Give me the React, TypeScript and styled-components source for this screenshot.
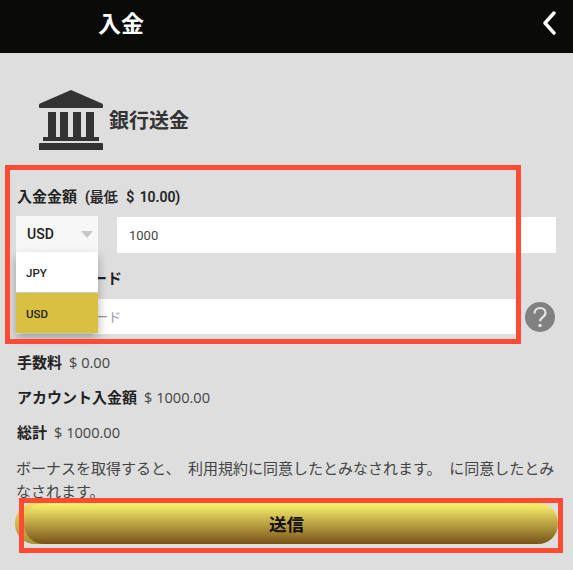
import React from "react";
import styled, { createGlobalStyle } from "styled-components";

const Global = createGlobalStyle`
  html, body { margin: 0; padding: 0; background: #dedede; }
  body { font-family: Roboto, "Noto Sans CJK JP", sans-serif; color: #222; overflow: hidden; }
`;
const Page = styled.div`
  position: relative;
  width: 573px;
  height: 570px;
  overflow: hidden;
  background: #dedede;
`;
const Header = styled.header`
  height: 53px;
  background: #0a0a09;
  display: flex;
  align-items: center;
  justify-content: space-between;
  padding: 0 17px 0 98px;
  color: #fff;
`;
const HeaderTitle = styled.h1`
  margin: 0 0 4px;
  font-size: 23px;
  font-weight: 700;
  line-height: 49px;
`;
const BackIcon = styled.svg`
  display: block;
  width: 14px;
  height: 24px;
  margin-bottom: 7px;
`;
const Method = styled.div`
  display: flex;
  align-items: center;
  gap: 6px;
  padding: 37px 0 0 39px;
  height: 60px;
`;
const BankIcon = styled.svg`
  display: block;
  flex: none;
  width: 64px;
  height: 60px;
`;
const MethodName = styled.span`
  font-size: 20px;
  font-weight: 700;
  line-height: 24px;
  margin-top: 2px;
  color: #333;
`;
const Form = styled.form`
  padding: 37px 17px 0 16px;
`;
const Label = styled.div`
  font-size: 15px;
  font-weight: 700;
  line-height: 20px;
  color: #222;
  padding-left: 1px;
`;
const LabelNote = styled.span`
  margin-left: 8px;
  font-size: 14px;
  font-weight: 500;
  -webkit-text-stroke: 0.2px #222;
  word-spacing: 2px;
`;
const AmountRow = styled.div`
  display: flex;
  gap: 19px;
  margin-top: 9px;
  align-items: flex-start;
`;
const Select = styled.div`
  position: relative;
  width: 82px;
  height: 36px;
  flex: none;
  background: #f7f7f7;
  box-sizing: border-box;
  padding-left: 11px;
  display: flex;
  align-items: center;
  font-size: 14px;
  font-weight: 500;
  color: #222;
`;
const Caret = styled.span`
  position: absolute;
  right: 5px;
  top: 15px;
  border-left: 6px solid transparent;
  border-right: 6px solid transparent;
  border-top: 7px solid #c8c8c8;
`;
const Menu = styled.ul`
  position: absolute;
  left: 0;
  top: 36px;
  width: 82px;
  margin: 0;
  padding: 0;
  list-style: none;
  background: #fff;
  box-shadow: 0 5px 10px rgba(0, 0, 0, 0.3);
  z-index: 2;
`;
const Option = styled.li<{ $active?: boolean }>`
  height: 40px;
  box-sizing: border-box;
  padding: 2px 0 0 10px;
  display: flex;
  align-items: center;
  font-size: 11.5px;
  color: #222;
  background: ${(p) => (p.$active ? "#d8c040" : "#fff")};
  ${(p) => (p.$active ? "border-top: 1px solid #c9c9c9; height: 41px;" : "")}
`;
const Input = styled.div<{ $placeholder?: boolean }>`
  flex: 1;
  height: 36px;
  margin-top: 1px;
  background: #fff;
  box-sizing: border-box;
  padding-left: ${(p) => (p.$placeholder ? "13px" : "12px")};
  display: flex;
  align-items: center;
  font-size: ${(p) => (p.$placeholder ? "13.2px" : "13px")};
  color: ${(p) => (p.$placeholder ? "#999" : "#444")};
`;
const BonusLabel = styled(Label)`
  margin-top: 16px;
`;
const BonusRow = styled.div`
  display: flex;
  align-items: flex-start;
  gap: 8px;
  margin-top: 10px;
  padding-right: 1px;
`;
const BonusInput = styled(Input)`
  height: 35px;
  margin-top: 0;
`;
const HelpIcon = styled.svg`
  display: block;
  width: 30px;
  height: 30px;
  flex: none;
  margin-top: 3px;
`;
const Summary = styled.div`
  margin-top: 17px;
  padding-left: 1px;
  display: flex;
  flex-direction: column;
  gap: 13px;
`;
const SummaryRow = styled.div`
  display: flex;
  align-items: baseline;
  gap: 7px;
  height: 22px;
  line-height: 22px;
`;
const SummaryKey = styled.span`
  font-size: 15px;
  font-weight: 700;
  color: #222;
`;
const SummaryValue = styled.span`
  font-size: 14.6px;
  color: #444;
  font-family: "Open Sans", "Noto Sans CJK JP", sans-serif;
`;
const Terms = styled.p`
  margin: 15px 0 0;
  width: 541px;
  font-size: 15px;
  line-height: 23px;
  color: #444;
  word-spacing: 4px;
`;
const Submit = styled.button`
  position: absolute;
  left: 24px;
  top: 503px;
  width: 534px;
  height: 41px;
  border: 0;
  border-radius: 20px;
  background: linear-gradient(#fdf56f, #7a5219);
  font: 700 17.5px Roboto, "Noto Sans CJK JP", sans-serif;
  color: #111;
  padding: 0 9px 0 0;
`;
const SubmitBack = styled.div`
  position: absolute;
  left: 15px;
  top: 503px;
  width: 60px;
  height: 41px;
  border-radius: 20px;
  background: linear-gradient(#f0e060, #a89038);
`;
const Callout = styled.div<{ $x: number; $y: number; $w: number; $h: number }>`
  position: absolute;
  left: ${(p) => p.$x}px;
  top: ${(p) => p.$y}px;
  width: ${(p) => p.$w}px;
  height: ${(p) => p.$h}px;
  box-sizing: border-box;
  border: 5px solid #ff4b33;
  z-index: 3;
  pointer-events: none;
`;

export default function App() {
  return (
    <Page>
      <Global />
      <Header>
        <HeaderTitle>入金</HeaderTitle>
        <BackIcon viewBox="0 0 14 24">
          <path d="M12 2 L3 12 L12 22" fill="none" stroke="#fff" strokeWidth="3.4" strokeLinecap="round" strokeLinejoin="round" />
        </BackIcon>
      </Header>
      <Method>
        <BankIcon viewBox="0 0 64 60">
          <path d="M32 0 L63 13.5 Q64 14 64 15 V17 Q64 18 63 18 H1 Q0 18 0 17 V15 Q0 14 1 13.5 Z" fill="#333" />
          <path d="M9 22h8v25H9zM21 22h8v25h-8zM34 22h8v25h-8zM47 22h8v25h-8z" fill="#333" />
          <path d="M4 47h56v4H4zM1 53h62q1 0 1 1v6H0v-6q0-1 1-1z" fill="#333" />
        </BankIcon>
        <MethodName>銀行送金</MethodName>
      </Method>
      <Form>
        <Label>
          入金金額<LabelNote>(最低 {"\u2009"}$ 10.00)</LabelNote>
        </Label>
        <AmountRow>
          <Select>
            USD
            <Caret />
            <Menu>
              <Option>JPY</Option>
              <Option $active>USD</Option>
            </Menu>
          </Select>
          <Input>1000</Input>
        </AmountRow>
        <BonusLabel>ボーナスコード</BonusLabel>
        <BonusRow>
          <BonusInput $placeholder>ボーナスコード</BonusInput>
          <HelpIcon viewBox="0 0 30 30">
            <circle cx="15" cy="15" r="15" fill="#808080" />
            <path d="M9.5 11.5c0-3.2 2.4-5.5 5.6-5.5s5.4 2 5.4 4.8c0 2.2-1.3 3.4-2.9 4.5-1.5 1-2.4 1.8-2.4 3.9" fill="none" stroke="#e6e6e6" strokeWidth="2.2" />
            <circle cx="15" cy="23.5" r="1.7" fill="#e6e6e6" />
          </HelpIcon>
        </BonusRow>
        <Summary>
          <SummaryRow>
            <SummaryKey>手数料</SummaryKey>
            <SummaryValue>$ 0.00</SummaryValue>
          </SummaryRow>
          <SummaryRow>
            <SummaryKey>アカウント入金額</SummaryKey>
            <SummaryValue>$ 1000.00</SummaryValue>
          </SummaryRow>
          <SummaryRow>
            <SummaryKey>総計</SummaryKey>
            <SummaryValue>$ 1000.00</SummaryValue>
          </SummaryRow>
        </Summary>
        <Terms>ボーナスを取得すると、 利用規約に同意したとみなされます。 に同意したとみなされます。</Terms>
      </Form>
      <SubmitBack />
      <Submit type="button">送信</Submit>
      <Callout $x={5} $y={165} $w={516} $h={179} />
      <Callout $x={19} $y={498} $w={544} $h={55} />
    </Page>
  );
}
